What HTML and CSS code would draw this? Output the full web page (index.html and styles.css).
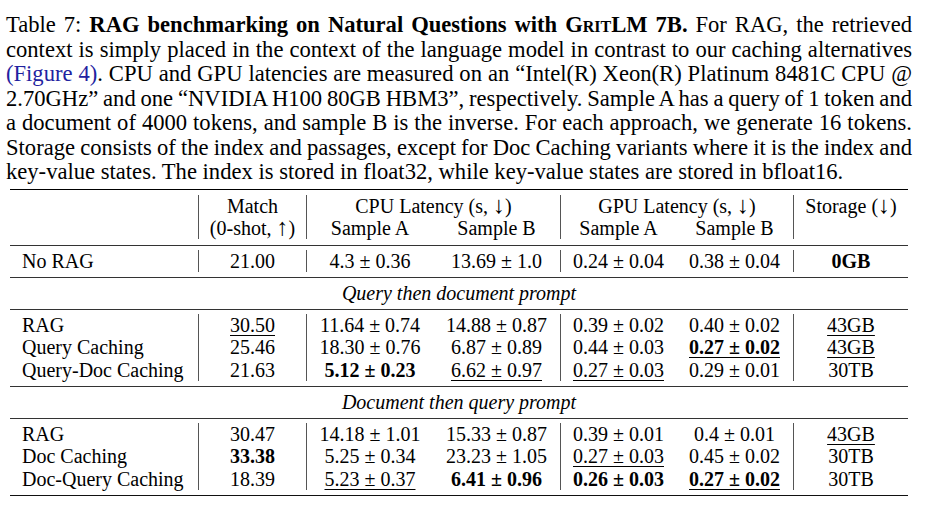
FILE: index.html
```html
<!DOCTYPE html>
<html lang="en">
<head>
<meta charset="utf-8">
<title>Table 7</title>
<link rel="stylesheet" href="styles.css">
</head>
<body>
<div class="page">
  <p class="caption">
    <span class="ln">Table 7: <b>RAG benchmarking on Natural Questions with G<span class="sc">rit</span>LM 7B.</b> For RAG, the retrieved</span>
    <span class="ln">context is simply placed in the context of the language model in contrast to our caching alternatives</span>
    <span class="ln"><span class="link">(Figure 4)</span>. CPU and GPU latencies are measured on an “Intel(R) Xeon(R) Platinum 8481C CPU @</span>
    <span class="ln">2.70GHz” and one “NVIDIA H100 80GB HBM3”, respectively. Sample A has a query of 1 token and</span>
    <span class="ln">a document of 4000 tokens, and sample B is the inverse. For each approach, we generate 16 tokens.</span>
    <span class="ln">Storage consists of the index and passages, except for Doc Caching variants where it is the index and</span>
    <span class="ln last">key-value states. The index is stored in float32, while key-value states are stored in bfloat16.</span>
  </p>

  <div class="tbl">
    <div class="blk head">
      <div class="c lbl"></div>
      <div class="c bar">Match</div>
      <div class="c bar span2">CPU Latency (s, <span class="ar">↓</span>)</div>
      <div class="c bar span2">GPU Latency (s, <span class="ar">↓</span>)</div>
      <div class="c bar">Storage (<span class="ar">↓</span>)</div>
      <div class="c lbl"></div>
      <div class="c bar">(0-shot, <span class="ar">↑</span>)</div>
      <div class="c bar">Sample A</div>
      <div class="c">Sample B</div>
      <div class="c bar">Sample A</div>
      <div class="c">Sample B</div>
      <div class="c bar"></div>
    </div>

    <div class="blk single">
      <div class="c lbl">No RAG</div>
      <div class="c bar">21.00</div>
      <div class="c bar">4.3 ± 0.36</div>
      <div class="c">13.69 ± 1.0</div>
      <div class="c bar">0.24 ± 0.04</div>
      <div class="c">0.38 ± 0.04</div>
      <div class="c bar"><b>0GB</b></div>
    </div>

    <div class="sect">Query then document prompt</div>

    <div class="blk data">
      <div class="c lbl">RAG</div>
      <div class="c bar"><u>30.50</u></div>
      <div class="c bar">11.64 ± 0.74</div>
      <div class="c">14.88 ± 0.87</div>
      <div class="c bar">0.39 ± 0.02</div>
      <div class="c">0.40 ± 0.02</div>
      <div class="c bar"><u>43GB</u></div>

      <div class="c lbl">Query Caching</div>
      <div class="c bar">25.46</div>
      <div class="c bar">18.30 ± 0.76</div>
      <div class="c">6.87 ± 0.89</div>
      <div class="c bar">0.44 ± 0.03</div>
      <div class="c"><u><b>0.27 ± 0.02</b></u></div>
      <div class="c bar"><u>43GB</u></div>

      <div class="c lbl">Query-Doc Caching</div>
      <div class="c bar">21.63</div>
      <div class="c bar"><b>5.12 ± 0.23</b></div>
      <div class="c"><u>6.62 ± 0.97</u></div>
      <div class="c bar"><u>0.27 ± 0.03</u></div>
      <div class="c">0.29 ± 0.01</div>
      <div class="c bar">30TB</div>
    </div>

    <div class="sect">Document then query prompt</div>

    <div class="blk data">
      <div class="c lbl">RAG</div>
      <div class="c bar">30.47</div>
      <div class="c bar">14.18 ± 1.01</div>
      <div class="c">15.33 ± 0.87</div>
      <div class="c bar">0.39 ± 0.01</div>
      <div class="c">0.4 ± 0.01</div>
      <div class="c bar"><u>43GB</u></div>

      <div class="c lbl">Doc Caching</div>
      <div class="c bar"><b>33.38</b></div>
      <div class="c bar">5.25 ± 0.34</div>
      <div class="c">23.23 ± 1.05</div>
      <div class="c bar"><u>0.27 ± 0.03</u></div>
      <div class="c">0.45 ± 0.02</div>
      <div class="c bar">30TB</div>

      <div class="c lbl">Doc-Query Caching</div>
      <div class="c bar">18.39</div>
      <div class="c bar"><u>5.23 ± 0.37</u></div>
      <div class="c"><b>6.41 ± 0.96</b></div>
      <div class="c bar"><b>0.26 ± 0.03</b></div>
      <div class="c"><u><b>0.27 ± 0.02</b></u></div>
      <div class="c bar">30TB</div>
    </div>
  </div>
</div>
</body>
</html>
```

FILE: styles.css
```css
html, body {
  margin: 0;
  padding: 0;
  background: #ffffff;
}

body {
  font-family: "Liberation Serif", "Times New Roman", serif;
  color: #000;
  font-size: 20px;
}

.page {
  width: 928px;
  height: 510px;
  overflow: hidden;
}

.caption {
  margin: 0;
  padding: 13px 0 0 6px;
  width: 906px;
  line-height: 24.5px;
  font-size: 22.6px;
}

.ln {
  display: block;
  text-align: justify;
  text-align-last: justify;
  white-space: nowrap;
  word-spacing: -1.6px;
}

.ln.last {
  text-align-last: left;
  word-spacing: 0;
}

.sc {
  font-variant: small-caps;
}

.link {
  color: #2222a0;
}

.tbl {
  margin: 4.5px 0 0 10px;
  width: 898px;
  border-top: 1.5px solid #000;
  border-bottom: 1.5px solid #111;
}

.blk {
  display: grid;
  grid-template-columns: 188px 108px 127px 127px 116px 117px 115px;
}

.blk.head {
  padding: 4.5px 0 6px;
  border-bottom: 1px solid #333;
}

.blk.single {
  padding: 4px 0 5px;
}

.blk.data {
  padding: 4px 0 4.5px;
}

.c {
  line-height: 22px;
  text-align: center;
  white-space: nowrap;
}

.blk.data .c {
  line-height: 22.5px;
}

.c.lbl {
  text-align: left;
  padding-left: 12px;
}

.c.bar {
  border-left: 1px solid #555;
}

.span2 {
  grid-column: span 2;
}

.ar {
  font-size: 24px;
  line-height: 0;
}

.sect {
  border-top: 1px solid #333;
  border-bottom: 1px solid #333;
  text-align: center;
  font-style: italic;
  line-height: 31px;
}

u {
  text-decoration: underline;
  text-decoration-thickness: 1px;
  text-underline-offset: 3px;
}
```
